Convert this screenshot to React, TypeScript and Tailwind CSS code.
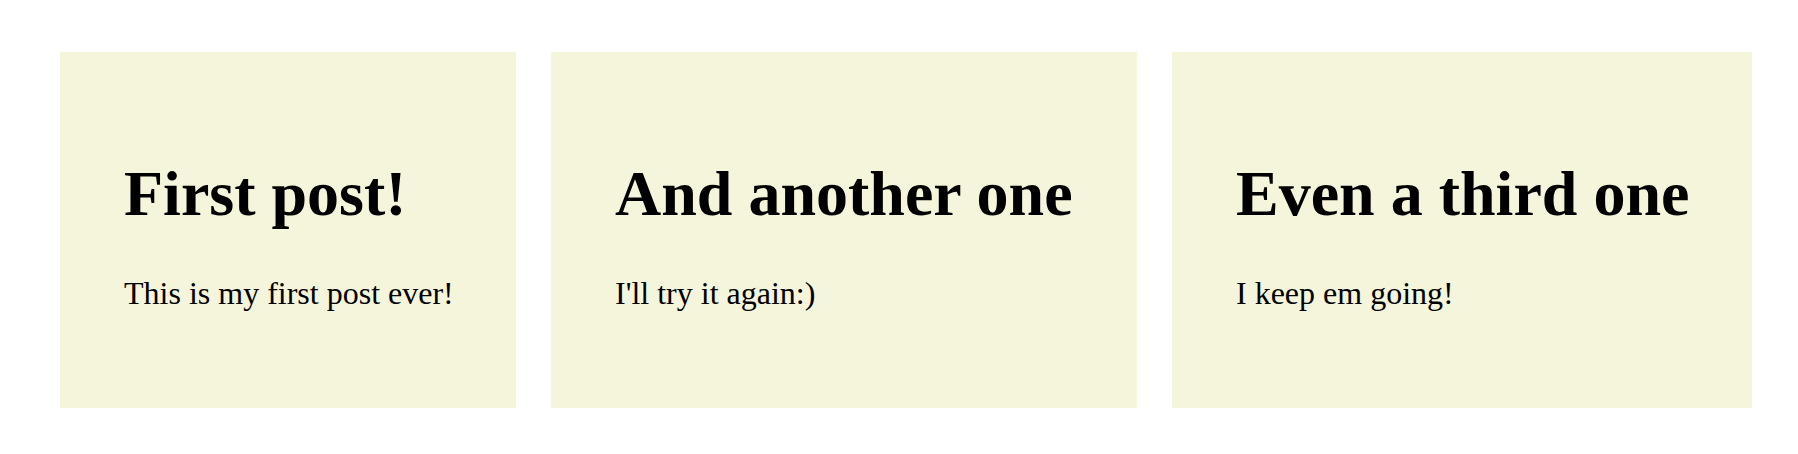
const posts = [
  { title: "First post!", body: "This is my first post ever!", width: "w-[456px]" },
  { title: "And another one", body: "I'll try it again:)", width: "w-[586px]" },
  { title: "Even a third one", body: "I keep em going!", width: "w-[580px]" },
];

const App = () => {
  return (
    <div
      className="min-h-screen w-full bg-white pt-[52px] pl-[60px] text-black"
      style={{ fontFamily: '"Liberation Serif", "Times New Roman", serif' }}
    >
      <div className="flex gap-[35px]">
        {posts.map((post) => (
          <div
            key={post.title}
            className={`${post.width} shrink-0 bg-[#f5f5dc] px-16 pt-[110px] pb-[99px]`}
          >
            <h1 className="text-[64px] font-bold leading-[64px] whitespace-nowrap">
              {post.title}
            </h1>
            <p className="mt-[51px] text-[32px] leading-[32px] whitespace-nowrap">
              {post.body}
            </p>
          </div>
        ))}
      </div>
    </div>
  );
};

export default App;
